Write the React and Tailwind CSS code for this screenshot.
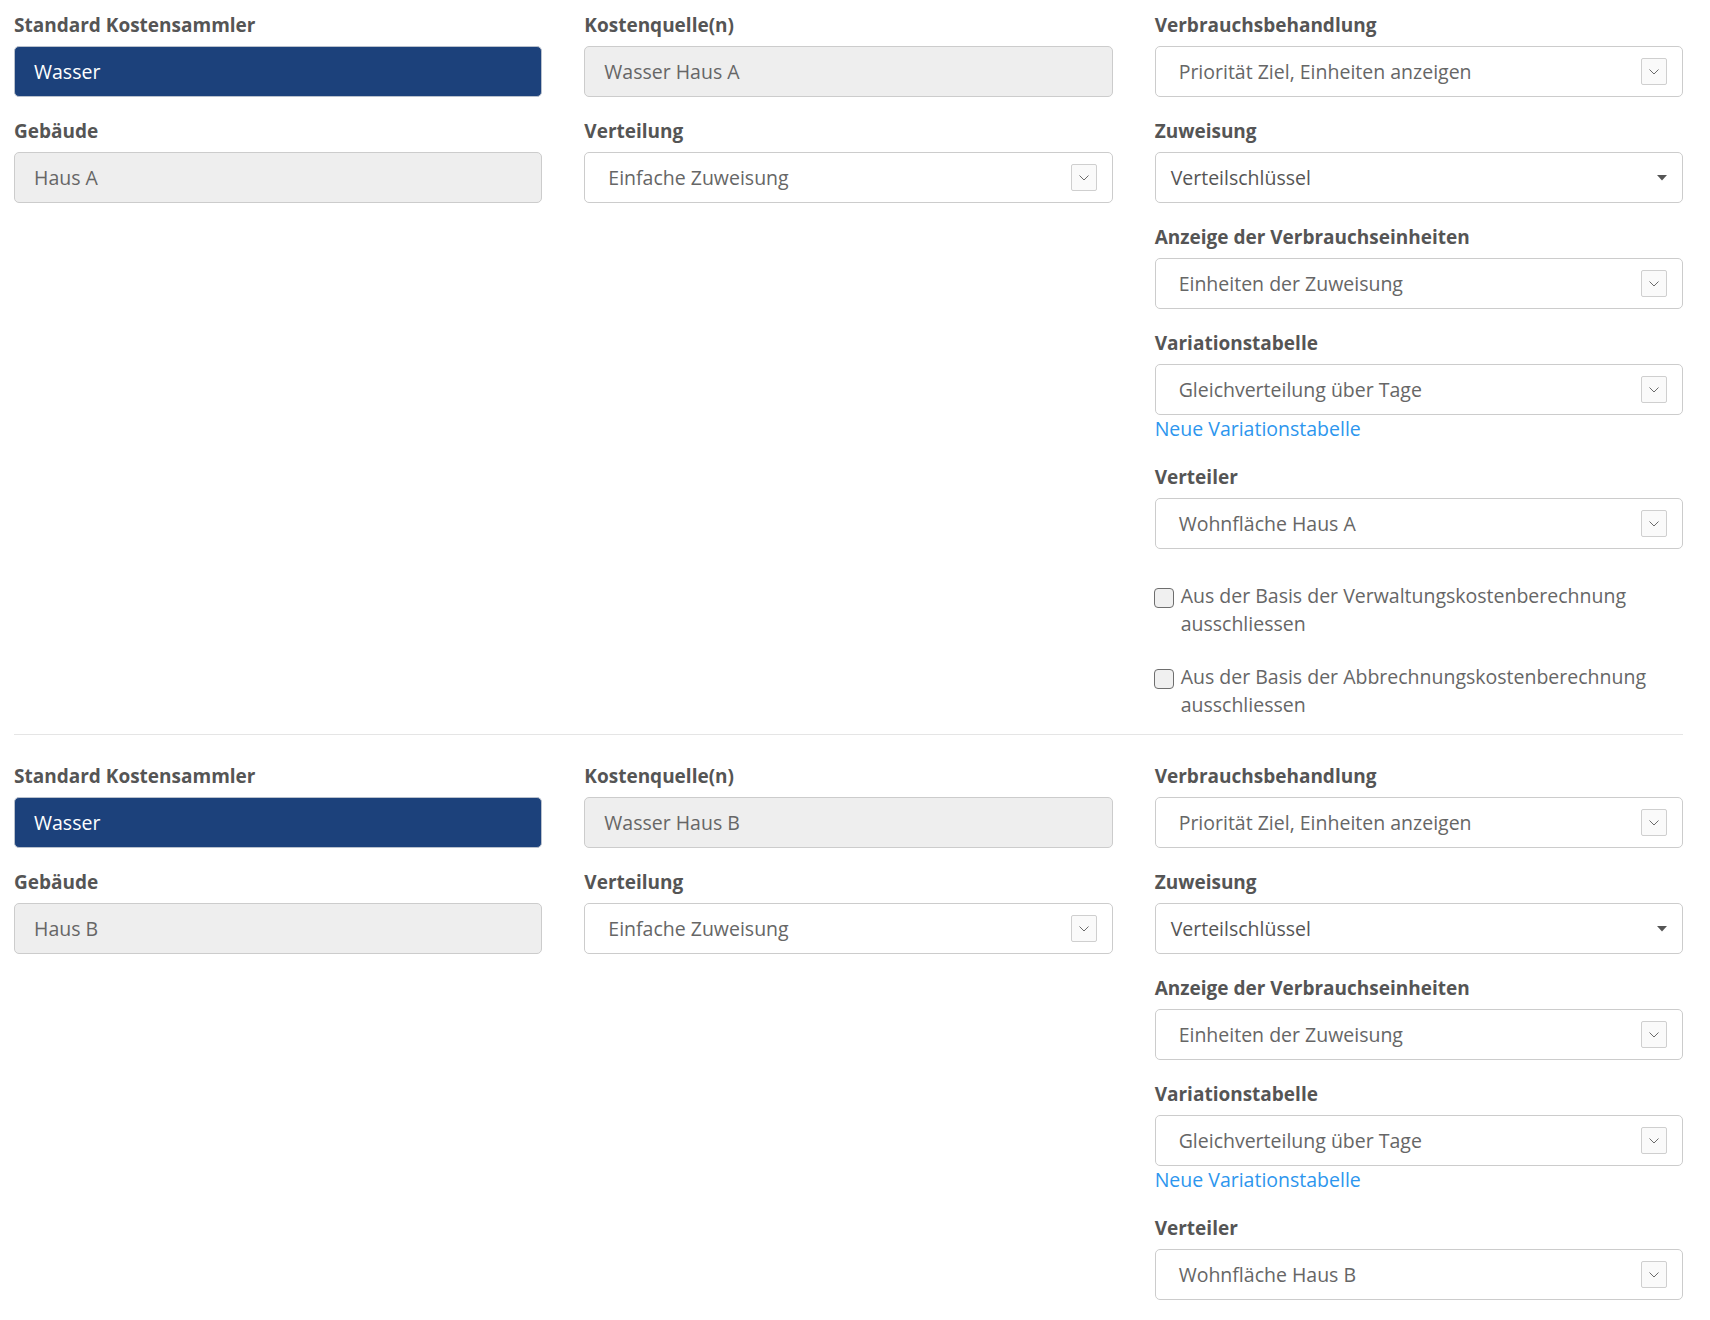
import { Fragment } from "react";

const sections = [
  {
    collector: "Wasser",
    source: "Wasser Haus A",
    building: "Haus A",
    distributor: "Wohnfläche Haus A",
    withOptions: true,
  },
  {
    collector: "Wasser",
    source: "Wasser Haus B",
    building: "Haus B",
    distributor: "Wohnfläche Haus B",
    withOptions: false,
  },
];

const Label = ({ children }) => (
  <label className="block text-[19px] leading-[28px] font-bold text-[#555555] mb-[7px]">
    {children}
  </label>
);

const Chevron = () => (
  <span className="flex items-center justify-center w-[26px] h-[27px] border border-[#cfcfcf] rounded-[2px] bg-[#fafafa]">
    <svg width="10" height="6" viewBox="0 0 10 6" fill="none">
      <polyline points="0.5,0.5 5,5 9.5,0.5" stroke="#6b6b6b" strokeWidth="1" />
    </svg>
  </span>
);

const Caret = () => (
  <svg width="10" height="6" viewBox="0 0 10 6">
    <polygon points="0,0 10,0 5,5.5" fill="#555555" />
  </svg>
);

// filled / readonly / dropdown / select look like the inputs of the edit form
const Field = ({ value, variant = "dropdown" }) => {
  const styles = {
    filled: "bg-[#1c417b] border-[#b9c1cd] text-white pl-[19px]",
    readonly: "bg-[#eeeeee] border-[#cccccc] text-[#666666] pl-[19px]",
    dropdown: "bg-white border-[#cccccc] text-[#666666] pl-[23px] pr-[15px]",
    select: "bg-white border-[#cccccc] text-[#555555] pl-[15px] pr-[15px]",
  };
  return (
    <div
      className={`flex items-center justify-between h-[51px] border rounded-[5px] text-[19.5px] ${styles[variant]}`}
    >
      <span>{value}</span>
      {variant === "dropdown" && <Chevron />}
      {variant === "select" && <Caret />}
    </div>
  );
};

const Group = ({ label, children }) => (
  <div className="mb-5">
    <Label>{label}</Label>
    {children}
  </div>
);

const Check = ({ children }) => (
  <div className="flex items-start">
    <span className="shrink-0 w-5 h-5 mt-[6px] mr-[7px] -ml-px rounded-[4px] border-[1.5px] border-[#6e6e6e] bg-[#f0f0f0]" />
    <span className="text-[19.5px] leading-[28px] text-[#666666]">{children}</span>
  </div>
);

const Section = ({ data }) => (
  <div className="grid grid-cols-3 gap-x-[42px]">
    <div>
      <Group label="Standard Kostensammler">
        <Field value={data.collector} variant="filled" />
      </Group>
      <Group label="Gebäude">
        <Field value={data.building} variant="readonly" />
      </Group>
    </div>
    <div>
      <Group label="Kostenquelle(n)">
        <Field value={data.source} variant="readonly" />
      </Group>
      <Group label="Verteilung">
        <Field value="Einfache Zuweisung" />
      </Group>
    </div>
    <div>
      <Group label="Verbrauchsbehandlung">
        <Field value="Priorität Ziel, Einheiten anzeigen" />
      </Group>
      <Group label="Zuweisung">
        <Field value="Verteilschlüssel" variant="select" />
      </Group>
      <Group label="Anzeige der Verbrauchseinheiten">
        <Field value="Einheiten der Zuweisung" />
      </Group>
      <Group label="Variationstabelle">
        <Field value="Gleichverteilung über Tage" />
        <a className="block text-[19.5px] leading-[28px] text-[#2d96ee] cursor-pointer">
          Neue Variationstabelle
        </a>
      </Group>
      <Group label="Verteiler">
        <Field value={data.distributor} />
      </Group>
      {data.withOptions && (
        <div className="pt-[13px] pb-[15px] flex flex-col gap-[25px]">
          <Check>Aus der Basis der Verwaltungskostenberechnung ausschliessen</Check>
          <Check>Aus der Basis der Abbrechnungskostenberechnung ausschliessen</Check>
        </div>
      )}
    </div>
  </div>
);

export default function App() {
  return (
    <div className="bg-white pl-[14px] pr-[27px] pt-[11px] font-['Open_Sans',sans-serif]">
      {sections.map((s, i) => (
        <Fragment key={s.source}>
          {i > 0 && <div className="border-t border-[#e5e5e5] mb-[27px]" />}
          <Section data={s} />
        </Fragment>
      ))}
    </div>
  );
}
